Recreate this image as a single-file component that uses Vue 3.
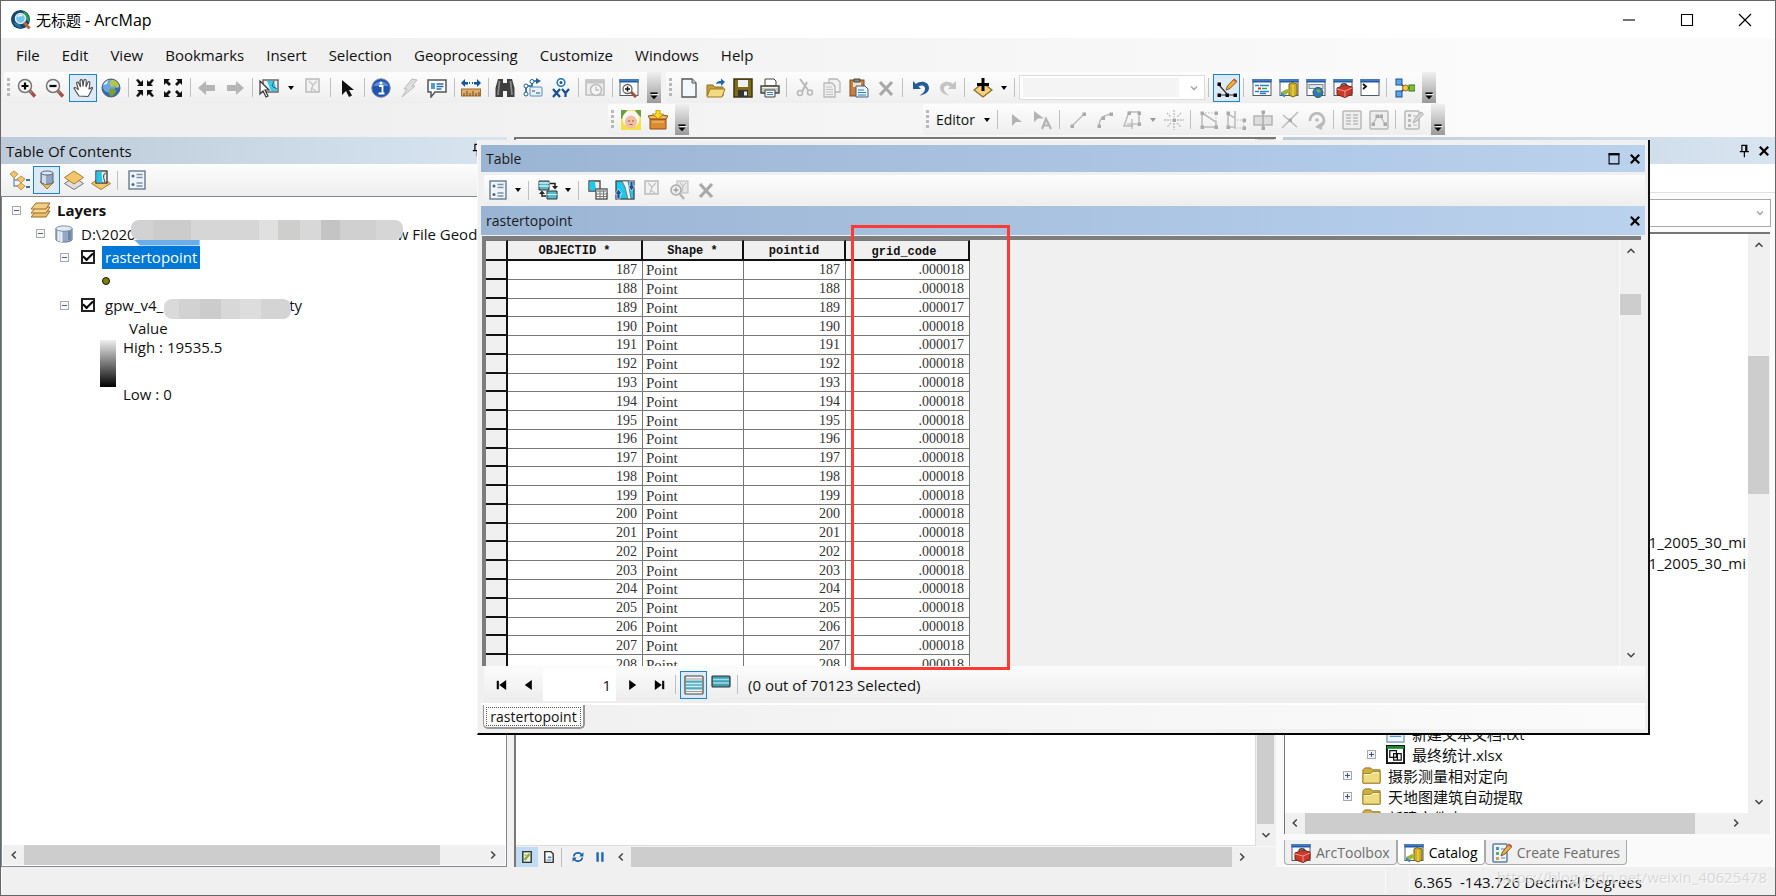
<script setup>
import { h } from 'vue'

const win = '<rect x="1" y="1.5" width="18" height="16" fill="#fff" stroke="#555b63"/><path d="M.5 1h19v3.5H.5z" fill="#1f5aa8"/><path d="M1 2h18" stroke="#6f9bd6"/>'
const node = (x, y, c = '#aaa') => `<rect x="${x - 1.5}" y="${y - 1.5}" width="3.5" height="3.5" fill="${c}"/>`
const lens = '<circle cx="8" cy="8" r="6.5" fill="#f4f6f7" stroke="#777" stroke-width="1.5"/><path d="M12.5 12.5l5.5 6" stroke="#a5503c" stroke-width="3.4"/><path d="M12.7 13l2 2" stroke="#888" stroke-width="2"/>'

const icons = {
  app: '<circle cx="9.5" cy="9.5" r="9.5" fill="#17466e"/><path d="M12 1a9 9 0 0 1 6 11l-4-3z" fill="#2c9a50"/><path d="M2 12c2 4 5 6 9 6l-3-4z" fill="#1c7c93"/><circle cx="9.5" cy="8.5" r="5" fill="#6fc5ea" stroke="#dce8ee" stroke-width="1.6"/><path d="M7 7c1-2 3-2 4-1" stroke="#fff" stroke-width="1.5" fill="none"/><path d="M13 12.500l5.500 6" stroke="#b5683f" stroke-width="3"/>',
  zoomin: lens + '<path d="M4.500 8h7M8 4.500v7" stroke="#000" stroke-width="2.200"/>',
  zoomout: lens + '<path d="M4.500 8h7" stroke="#000" stroke-width="2.200"/>',
  hand: '<path d="M6 18C4 15 2 12 1 10c1-1 3 0 4.500 2L3.500 5c1-1.500 2-1 2.500.500L7.500 9 7 2.500C8 1 9 1.500 9.500 3l.5 5.500L11 2c1-1 2.200-.500 2.200.800L13 9l2-5c1.200-1 2.200 0 1.800 1.500L16 11c2 0 3-3 3.500-1C18 13 17 16 15 18.500z" fill="#fff" stroke="#4c4c4c" stroke-width="1.100"/>',
  globe: '<circle cx="10" cy="10" r="9" fill="#2f6cbb"/><circle cx="8" cy="8" r="6.500" fill="#6aa6e4"/><path d="M10 2c4-1 8 3 8.500 7l-3 1-2-2-3 1-2-3z" fill="#b5c64c"/><path d="M9 11c3-1 6 0 6 2s-3 5-5 5.500C8 17 7 13 9 11z" fill="#7f9d32"/><path d="M2 7c1-2 3-4 5-5l-1 4z" fill="#dcecfa"/><circle cx="10" cy="10" r="9" fill="none" stroke="#51606b"/>',
  fixin: '<path d="M1 2l2-1 3 3 2-2v6H2l2-2zM19 2l-2-1-3 3-2-2v6h6l-2-2zM1 18l2 1 3-3 2 2v-6H2l2 2zM19 18l-2 1-3-3-2 2v-6h6l-2 2z" fill="#111"/>',
  fixout: '<path d="M1 1h6L5 3l3 3-2 2-3-3-2 2zM19 1h-6l2 2-3 3 2 2 3-3 2 2zM1 19h6l-2-2 3-3-2-2-3 3-2-2zM19 19h-6l2-2-3-3 2-2 3 3 2-2z" fill="#111"/>',
  back: '<path d="M1 10l8-7v4h9v6H9v4z" fill="#b5b5b5"/>',
  fwd: '<path d="M19 10l-8-7v4H2v6h9v4z" fill="#b5b5b5"/>',
  select: '<rect x="4" y="2" width="15" height="12" fill="#eee" stroke="#666" stroke-width="1.500"/><path d="M8 3h7l3 10h-6z" fill="#2fd0ee"/><path d="M15 3l-2 5 5 3" stroke="#556" fill="none"/><path d="M1 3v13l3-3 3 6 2-1-3-6h4z" fill="#fff" stroke="#333" stroke-width="1.200"/>',
  clear: '<rect x="3" y="1" width="13" height="13" fill="#f2f2f2" stroke="#bbb" stroke-width="1.500"/><path d="M6 3l4 4 4-4M10 7l-2 6M8 10l5 3" stroke="#c4c4c4" fill="none" stroke-width="1.300"/>',
  arrow: '<path d="M5 2v15l4-4 3 6 3-1.500-3-5.500h5z" fill="#111"/>',
  info: '<circle cx="10" cy="10" r="9.200" fill="#1f55b0" stroke="#6c7c96"/><path d="M2.500 8a8 7 0 0 1 15 0z" fill="#5b8ada"/><path d="M8 8h3.500v7M7.500 15.500h6" stroke="#fff" stroke-width="1.800" fill="none"/><circle cx="10" cy="5" r="1.500" fill="#fff"/>',
  bolt: '<path d="M13 1l5 1-5 6h3L3 19l5-8H5z" fill="#dedede" stroke="#bbb"/>',
  popup: '<path d="M1 2h18v12H8l-4 5v-5H1z" fill="#fff" stroke="#555" stroke-width="1.500"/><rect x="4" y="5" width="4" height="6" fill="#4f9bd3"/><path d="M9.500 6h7M9.500 8.500h7M9.500 11h5" stroke="#2b6cb0" stroke-width="1.300"/>',
  measure: '<path d="M0 5l4-4v3h3v2.500H4V9zM20 5l-4-4v3h-3v2.500h3V9z" fill="#12559b"/><path d="M8 5h1M11 5h1" stroke="#12559b" stroke-width="2"/><rect x=".5" y="11" width="19" height="7" fill="#e0ad6a" stroke="#9c6b30"/><path d="M3 18v-3M6 18v-5M9 18v-3M12 18v-5M15 18v-3M18 18v-4" stroke="#6d4619"/>',
  binoc: '<path d="M3 1h5v4h4V1h5l2.500 9v9H12v-6H8v6H.5v-9z" fill="#3f3f3f"/><path d="M4.500 3L3 17M15.500 3L17 17" stroke="#8b8b8b" stroke-width="1.800"/>',
  route: '<path d="M3 15V8h6V3h5" stroke="#1f6095" stroke-width="1.600" fill="none"/><path d="M13 0l5 3-5 3z" fill="#1f6095"/><circle cx="3" cy="16" r="2" fill="#fff" stroke="#1f6095"/><circle cx="3" cy="8" r="2" fill="#fff" stroke="#1f6095"/><circle cx="9" cy="3.500" r="2" fill="#fff" stroke="#1f6095"/><rect x="7" y="9" width="12" height="9" rx="1" fill="#e9f2fa" stroke="#5a88ae"/><path d="M9 13h3M13 15h4" stroke="#5a88ae" stroke-width="1.500"/>',
  xy: '<circle cx="10" cy="4.500" r="3.800" fill="#fff" stroke="#1f78b8" stroke-width="1.600"/><circle cx="10" cy="4.500" r="1.500" fill="#1f5a94"/><path d="M2 11l7 8M9 11l-7 8M11 11l3.500 4L18 11M14.500 15v4" stroke="#174f8f" stroke-width="2.200" fill="none"/>',
  time: '<rect x="1" y="2" width="18" height="15" fill="#eee" stroke="#bdbdbd" stroke-width="1.500"/><path d="M1 4h18" stroke="#c6c6c6" stroke-width="3"/><circle cx="11" cy="12" r="5.500" fill="#f5f5f5" stroke="#bbb" stroke-width="1.500"/><path d="M11 8.500V12h3" stroke="#bbb" fill="none" stroke-width="1.300"/>',
  viewer: win + '<circle cx="8.500" cy="11" r="4.500" fill="#fff" stroke="#666" stroke-width="1.300"/><path d="M6 11h5M8.500 8.500v5" stroke="#111" stroke-width="1.500"/><path d="M12 14l5 5" stroke="#a5503c" stroke-width="3"/>',
  newdoc: '<path d="M3 1h10l4 4v14H3z" fill="#f3f8fd" stroke="#555" stroke-width="1.300"/><path d="M13 1v4h4" fill="#cfdce8" stroke="#555"/>',
  open: '<path d="M1 7h6l1.500 2H17v9H1z" fill="#c6a23a" stroke="#8b6d1c"/><path d="M4 11h15l-3 8H1z" fill="#f2db82" stroke="#9a7a22"/><path d="M10 6c1-3 3-3 5-3V.5L19 4l-4 4V5.500c-2 0-3 0-5 .5z" fill="#1f66a8"/>',
  save: '<path d="M1 1h18v18H1z" fill="#7d6c1b" stroke="#3e3712" stroke-width="1.500"/><rect x="5" y="2" width="10" height="7" fill="#eef0f2"/><rect x="5" y="12" width="10" height="7" fill="#333"/><rect x="11" y="13.500" width="3" height="4" fill="#eee"/>',
  print: '<path d="M5 1h9l2 2v5H5z" fill="#fff" stroke="#444"/><path d="M1 8h18v7H1z" fill="#c3c9bb" stroke="#444" stroke-width="1.400"/><path d="M5 12h10v7H5z" fill="#eaf3fb" stroke="#444"/><path d="M7 14.500h6M7 16.500h6" stroke="#4d86b8"/><path d="M2 9.500h16" stroke="#f4f4ee"/>',
  cut: '<path d="M5 1l8 11M12 4L7 14" stroke="#b9b9b9" stroke-width="2"/><circle cx="5" cy="15" r="2.500" fill="none" stroke="#b9b9b9" stroke-width="1.600"/><circle cx="15" cy="14.500" r="2.500" fill="none" stroke="#b9b9b9" stroke-width="1.600"/>',
  copy: '<path d="M7 1h8l3 3v10H7z" fill="#f2f2f2" stroke="#b9b9b9" stroke-width="1.300"/><path d="M2 5h8l3 3v11H2z" fill="#eee" stroke="#b9b9b9" stroke-width="1.300"/><path d="M4 9h6M4 11.500h7M4 14h7M4 16.500h7" stroke="#c4c4c4"/>',
  paste: '<rect x="1" y="2" width="14" height="16" fill="#c4823d" stroke="#7d4b1b"/><rect x="4" y="4" width="8" height="5" fill="#f0e3cd"/><path d="M5 1h6v3H5z" fill="#888" stroke="#444"/><path d="M7 8h9l3 3v8H7z" fill="#eaf4fc" stroke="#445f7d"/><path d="M9 12h6M9 14.500h8M9 17h8" stroke="#2d7cc0"/>',
  del: '<path d="M4 4l12 13M16 4L4 17" stroke="#a9a9a9" stroke-width="3.200"/>',
  undo: '<path d="M2 3v8h8L7.500 8.500c4-2.500 8 0 6 4.500-1 2-2.500 3-5 4.500 5-.5 9-3 9.500-7C18.500 4 10 1.500 5 6z" fill="#225c98"/>',
  redo: '<path d="M18 3v8h-8l2.500-2.500c-4-2.500-8 0-6 4.500 1 2 2.500 3 5 4.500-5-.5-9-3-9.500-7C1.500 4 10 1.500 15 6z" fill="#c3c3c3"/>',
  add: '<path d="M10 5l9 7-9 7-9-7z" fill="#f4cf7c" stroke="#8c6c2b" stroke-width="1.300"/><path d="M10 0v13M4 6.500h12" stroke="#000" stroke-width="3"/>',
  edittog: '<path d="M2 7l8 9M2 17h15" stroke="#333" stroke-width="1.200"/>' + [[2, 17], [10, 17], [18, 17], [2, 6]].map(p => node(p[0], p[1], '#000')).join('') + '<path d="M9 12l1.500-4L17 1l3 2.500L13 10.500z" fill="#eeae3c" stroke="#8a6020"/><path d="M16 2l1.500-1.500L20 3l-1 1.500z" fill="#d35252"/>',
  tocwin: win + '<path d="M3 7.500h4M8 7.500h9M3 13.500h4M8 13.500h9M8 15.500h6" stroke="#2b7fd0" stroke-width="1.300"/><path d="M6 10.500h3" stroke="#d33" stroke-width="2"/><path d="M10 10.500h5" stroke="#3a3" stroke-width="1.500"/>',
  catalog: win + '<path d="M10 6l3-1.500 5 1.500v11l-4 2-4-2z" fill="#cfae22" stroke="#7a6410"/><path d="M14 7v11" stroke="#f2df6a"/><path d="M2 14l6-3 4 2-6 4z" fill="#a0b33a"/><path d="M2 14l4 3v2.500L2 17z" fill="#3a87b8"/>',
  searchwin: win + '<rect x="3" y="6.500" width="14" height="4" fill="#d8e3ee" stroke="#7c8a98"/><circle cx="12" cy="14.500" r="5" fill="#2f78b8" stroke="#355"/><path d="M10 12c2-2 5 0 5 2l-3 1z" fill="#79b04c"/>',
  toolbox: win + '<path d="M4 10l8-3 7 2v7l-7 3.500-8-3z" fill="#c93a2b" stroke="#7b1d15"/><path d="M4 11l8 2 7-3M12 13v6" stroke="#f09a8c" fill="none"/><path d="M8 8c0-3 6-3 6 0" stroke="#444" fill="none" stroke-width="1.300"/>',
  python: win + '<path d="M3 6l3 2.500L3 11" stroke="#111" fill="none" stroke-width="1.800"/>',
  model: '<path d="M4 4l6 6-6 6M10 10h6" stroke="#456" stroke-width="1.500" fill="none"/><rect x="1" y="1" width="6" height="6" fill="#5aa6ea" stroke="#1b4f8d"/><rect x="1" y="13" width="6" height="6" fill="#5aa6ea" stroke="#1b4f8d"/><circle cx="10.500" cy="10" r="3" fill="#f3c948" stroke="#8c6a14"/><rect x="14" y="7" width="6" height="6" fill="#7fc13d" stroke="#3e6e17"/>',
  sheep: '<path d="M0 0h20v20H0z" fill="#f4e14a"/><path d="M0 0h6l-2 6-4 3zM14 0h6v7l-4-3z" fill="#679e46"/><circle cx="10" cy="9" r="8.500" fill="#f8f4ee"/><ellipse cx="10" cy="12" rx="6" ry="6.500" fill="#efc0a4"/><circle cx="8" cy="11" r=".8" fill="#844"/><circle cx="12" cy="11" r=".8" fill="#844"/><path d="M8.500 14.500h3" stroke="#b55"/>',
  box: '<path d="M2 9h16v10H2z" fill="#dd8a33" stroke="#88501a"/><path d="M2 9L0 6l6-1 4 4 4-4 6 1-2 3z" fill="#f3b765" stroke="#88501a"/><path d="M4 12h12" stroke="#f6c585"/><path d="M8 0h4v4h3.500L10 9 4.500 4H8z" fill="#ffd91f" stroke="#a87b00" stroke-width=".7"/>',
  play: '<path d="M6 4v12l4-4h6z" fill="#b3b3b3"/>',
  playA: '<path d="M1 1v11l4-3.500h6z" fill="#b3b3b3"/><path d="M9 19l4-10 5 10M11 15.500h5.500" stroke="#b3b3b3" stroke-width="2.200" fill="none"/>',
  line: '<path d="M4 16L16 4" stroke="#bbb" stroke-width="1.500"/>' + node(4, 16) + node(16, 4),
  arc: '<path d="M4 16C4 9 9 5 17 4" stroke="#bbb" stroke-width="1.500" fill="none"/>' + node(4, 16) + node(8, 8) + node(16, 4),
  trace: '<path d="M7 2h10v12M7 2L2 16h9" stroke="#bbb" stroke-width="1.500" fill="none"/>' + node(7, 3) + node(17, 3) + node(17, 14) + '<path d="M10 9v10M5 14h10" stroke="#aaa"/>',
  burst: '<path d="M10 0v7M10 13v7M0 10h7M13 10h7M3 3l4 4M13 13l4 4M17 3l-4 4M7 13l-4 4" stroke="#bbb" stroke-width="1.300" stroke-dasharray="2 1"/>' + node(10, 10),
  poly: '<path d="M3 3v14h14V12L3 3" stroke="#bbb" stroke-width="1.500" fill="none"/><path d="M3 3h14v9" stroke="#bbb" stroke-dasharray="1.500 1.500" fill="none"/>' + node(3, 3) + node(17, 3) + node(3, 17) + node(17, 17),
  reshape: '<path d="M2 4v13h7V8zM9 1v18" stroke="#bbb" stroke-width="1.500" fill="none"/><path d="M11 10h7v8h-7" stroke="#bbb" stroke-dasharray="1.500 1.500" fill="none"/>' + node(2, 3) + node(2, 17) + node(18, 10) + node(18, 18),
  split: '<rect x="1" y="6" width="18" height="9" fill="#ddd" stroke="#b5b5b5" stroke-width="1.500"/><path d="M10 1v18" stroke="#aaa" stroke-width="1.500"/>' + node(10, 2) + node(10, 18),
  cross: '<path d="M2 18L18 2M3 5l14 12" stroke="#bbb" stroke-width="1.500"/>' + node(10, 10),
  rotate: '<path d="M3 11a7 7 0 1 1 9 6" stroke="#bbb" stroke-width="2.800" fill="none"/><path d="M15 12v8l-7-3z" fill="#bbb"/><circle cx="10" cy="10" r="1.800" fill="#bbb"/>',
  attrs: '<rect x="1" y="1" width="18" height="18" rx="1" fill="#eee" stroke="#b9b9b9" stroke-width="1.500"/><path d="M4 5h5M4 8h5M4 11h5M4 14h5M11 5h5M11 8h5M11 11h5M11 14h5" stroke="#bbb" stroke-width="1.300"/>',
  sketch: '<rect x="1" y="1" width="18" height="18" rx="1" fill="#eee" stroke="#b9b9b9" stroke-width="1.500"/><path d="M4 14l4-7h4l4 7" stroke="#bbb" fill="none" stroke-width="1.300"/>' + node(4, 14) + node(8, 6) + node(12, 6) + node(16, 14),
  create: '<rect x="1" y="1" width="14" height="18" rx="1" fill="#f1f1f1" stroke="#b9b9b9" stroke-width="1.500"/><path d="M4 4h3v3H4zM4 9h3v3H4zM4 14h3v3H4z" fill="#bbb"/><path d="M9 6h4M9 15h4" stroke="#bbb"/><path d="M9 13l1.500-4L17 2l2.500 2L13 11z" fill="#d6d6d6" stroke="#b0b0b0"/>',
  createc: '<rect x="1" y="1" width="14" height="18" rx="1" fill="#edf4fb" stroke="#5e7f9e" stroke-width="1.500"/><path d="M4 4h3v3H4z" fill="#4d8fd0"/><path d="M4 9h3v3H4z" fill="#5fb160"/><path d="M4 14h3v3H4z" fill="#e09a3f"/><path d="M9 6h4M9 15h4" stroke="#58a"/><path d="M9 13l1.500-4L17 1l3 2.500L13 11z" fill="#eeb04a" stroke="#7a5a20"/><path d="M16 2l1.500-1.500L20 3l-1 1.500z" fill="#d35252"/>',
  drawo: '<path d="M4 6v10h6M4 10h6" stroke="#7694b3" stroke-width="1.300" fill="none"/><path d="M4 1l4 3-4 4-4-4zM11 6l4 3-4 4-4-4zM11 13l4 3-4 4-4-4z" fill="#f0c56c" stroke="#b4863a" stroke-width=".8"/><path d="M16 10h4M16 17h4" stroke="#2d79ae" stroke-width="2"/>',
  source: '<path d="M3 12l7-4 7 4-7 7z" fill="#edbb5b" stroke="#a87a2c"/><path d="M4 3v9c0 3 12 3 12 0V3z" fill="#8fa5c3" stroke="#556880"/><path d="M6 4v9M8 4v10" stroke="#e6edf5" stroke-width="1.500"/><ellipse cx="10" cy="3" rx="6" ry="2" fill="#dfe7f1" stroke="#556880"/>',
  visible: '<path d="M10 7l9.500 6.500L10 19.500.5 13.500z" fill="#dedede" stroke="#777"/><path d="M10 1l9.500 6.500L10 14 .5 7.500z" fill="#f3c66e" stroke="#a87a2c"/>',
  selected: '<path d="M10 7l9.500 6.500L10 19.500.5 13.500z" fill="#f3c66e" stroke="#a87a2c"/><rect x="5" y="1" width="11" height="12" fill="#eee" stroke="#333" stroke-width="1.300"/><path d="M5.500 1.500h5l1 11h-6z" fill="#21c8e8"/><path d="M15 3c-3 1-3 4-1 9" stroke="#333" fill="none"/>',
  options: '<rect x="2" y="1" width="16" height="18" fill="#eef4fa" stroke="#5d7187" stroke-width="1.300"/><circle cx="6" cy="6" r="1.500" fill="#567"/><circle cx="6" cy="14.500" r="1.500" fill="#567"/><path d="M9.500 4.500h6M9.500 7.500h6M9.500 13h6M9.500 16h6" stroke="#7a93ad" stroke-width="1.300"/>',
  layers: '<path d="M5 11h14l-4 6H0z" fill="#eebf69" stroke="#9a6c26"/><path d="M5 7h14l-4 6H0z" fill="#f6d592" stroke="#9a6c26"/><path d="M5 3h14l-4 6H0z" fill="#f3cd85" stroke="#9a6c26"/>',
  gdb: '<path d="M1 4v12c0 4 18 4 18 0V4z" fill="#96a9c4" stroke="#5f7187"/><path d="M4 5v13M7 6v13" stroke="#edf2f8" stroke-width="2.500"/><path d="M16 6v11" stroke="#6f84a3" stroke-width="3"/><ellipse cx="10" cy="4" rx="9" ry="3" fill="#e3eaf3" stroke="#74869c"/>',
  related: '<path d="M1 1h10v9H1z" fill="#58b9cc" stroke="#333"/><path d="M1 3h10M1 6h10M9 14h10M9 17h10" stroke="#c9eef4" stroke-width="1.300"/><path d="M9 11h10v8H9z" fill="#58b9cc" stroke="#333"/><path d="M9 14.500h10" stroke="#c9eef4"/><path d="M12 3.500h5V7M8 16H4v-4" stroke="#222" stroke-width="1.500" fill="none"/><path d="M14 6h6l-3 3.500zM1 14h6l-3-3.500z" fill="#222"/>',
  selattr: '<path d="M1 1h11v10H1z" fill="#eee" stroke="#444" stroke-width="1.300"/><path d="M1.500 1.500H7l1 9H1.500z" fill="#1fc9ea"/><rect x="8" y="9" width="11" height="10" fill="#fff" stroke="#444" stroke-width="1.300"/><path d="M8 11h11" stroke="#aaa" stroke-width="2.500"/><path d="M8 14h11M8 16.500h11M12 11v8M15.500 11v8" stroke="#777"/>',
  switchs: '<rect x="1" y="1" width="18" height="18" fill="#1fc9ea" stroke="#444" stroke-width="1.300"/><path d="M7 1l3 6 3 12h3L13 1z" fill="#f2f2f2" stroke="#555" stroke-width=".7"/><path d="M15 1h3v5h2l-3.500 5L13 6h2zM2 19v-5H0l3.500-5L7 14H5v5z" fill="#14539c" stroke="#fff" stroke-width=".6"/>',
  zoomsel: '<rect x="8" y="1" width="11" height="12" fill="#e6e6e6" stroke="#bbb"/><path d="M11 3l3 3 3-3M14 6l-1 6" stroke="#bbb" fill="none"/><circle cx="7" cy="10" r="5" fill="#eee" stroke="#aaa" stroke-width="1.500"/><path d="M4.500 10h5M7 7.500v5" stroke="#888"/><path d="M11 14l4 5" stroke="#b5b5b5" stroke-width="2.500"/>',
  first: '<path d="M4 4v12" stroke="#000" stroke-width="3"/><path d="M16 3v14L6 10z"/>',
  prev: '<path d="M14 3v14L4 10z"/>',
  next: '<path d="M6 3v14l10-7z"/>',
  last: '<path d="M16 4v12" stroke="#000" stroke-width="3"/><path d="M4 3v14l10-7z"/>',
  showall: '<rect x="1" y="1" width="18" height="18" rx="1" fill="#f4f4f4" stroke="#444" stroke-width="1.200"/><path d="M1.500 4h17M1.500 16.500h17" stroke="#999"/><path d="M2 5.500h16v9H2z" fill="#54aabb"/><path d="M2 8.500h16M2 11.500h16" stroke="#c9eef4" stroke-width="1.300"/>',
  showsel: '<rect x="1" y="1" width="18" height="11" rx="1" fill="#3f9fb3" stroke="#333" stroke-width="1.200"/><path d="M2 4.500h16M2 8h16" stroke="#a8dbe6" stroke-width="1.400"/>',
  dataview: '<rect x="3" y="1" width="14" height="18" fill="#eef2da" stroke="#333" stroke-width="2.400"/><path d="M6 15l8-10" stroke="#84ad47" stroke-width="4"/><path d="M6 6l4 3" stroke="#a9c66e" stroke-width="3"/>',
  layoutview: '<path d="M3 1h10l4 4v14H3z" fill="#fff" stroke="#333" stroke-width="2.400"/><path d="M8 9h6v3H8zM6 14h8v2H6z" fill="#3c82b8"/>',
  refresh: '<path d="M3 9c0-6 9-8 13-3M17 11c0 6-9 8-13 3" stroke="#155ba5" stroke-width="2.600" fill="none"/><path d="M19 2v7h-7zM1 18v-7h7z" fill="#155ba5"/>',
  pause: '<path d="M6 2v16M14 2v16" stroke="#1f66b5" stroke-width="4"/>',
  folder: '<path d="M1 4l2-2h6l2 2h8v14H1z" fill="#cdb03f" stroke="#8c7420"/><path d="M1 8h8l2-2h8v12H1z" fill="#efdc80" stroke="#9c8226"/><path d="M2 9h7.500l2-2H18" stroke="#fff6c2" fill="none"/>',
  txt: '<rect x="1" y="0" width="18" height="19" fill="#eff6fd" stroke="#6f8fb5" stroke-width="1.300"/><path d="M4 5h12M4 9h12M4 13h12" stroke="#5a93d0" stroke-width="1.300"/>',
  xlsx: '<rect x="1" y="1" width="18" height="18" fill="#fff" stroke="#111" stroke-width="2"/><path d="M1 2.500h18" stroke="#138a2c" stroke-width="3"/><path d="M4 6h7v7H4zM8 9h8v7H8zM12 9v7" fill="#fff" stroke="#111" stroke-width="1.300"/>',
  up: '<path d="M5 12.500l5-5 5 5" fill="none" stroke="#444" stroke-width="2.200"/>',
  down: '<path d="M5 7.500l5 5 5-5" fill="none" stroke="#444" stroke-width="2.200"/>',
  left: '<path d="M12.500 5l-5 5 5 5" fill="none" stroke="#444" stroke-width="2.200"/>',
  right: '<path d="M7.500 5l5 5-5 5" fill="none" stroke="#444" stroke-width="2.200"/>',
  pin: '<path d="M7 2h7v9H7zM12.500 2v9M4 11h13M10.500 11v8" stroke="#000" stroke-width="1.700" fill="none"/>',
  close: '<path d="M4 4l12 12M16 4L4 16" stroke="#000" stroke-width="3.200"/>',
  square: '<path d="M3 4h14v13H3z" fill="none" stroke="#000" stroke-width="1.600"/><path d="M2 3h16" stroke="#000" stroke-width="3"/>',
  wmin: '<path d="M4 10h12" stroke="#000" stroke-width="1.100"/>',
  wmax: '<path d="M4.500 4.500h11v11h-11z" stroke="#000" stroke-width="1.100" fill="none"/>',
  wclose: '<path d="M4 4l12 12M16 4L4 16" stroke="#000" stroke-width="1.200"/>',
  over: '<path d="M4 7h12" stroke="#000" stroke-width="2.500"/><path d="M4 11h12l-6 6z"/><path d="M6 9.300h12" stroke="#fff" stroke-width="1.500"/>'
}
const Ic = ({ n }) => h('svg', { viewBox: '0 0 20 20', class: 'ic', 'aria-hidden': 'true', innerHTML: icons[n] })
Ic.props = ['n']

const menus = ['File', 'Edit', 'View', 'Bookmarks', 'Insert', 'Selection', 'Geoprocessing', 'Customize', 'Windows', 'Help']
const tools = 'zoomin zoomout *hand globe | fixin fixout | back fwd | select v clear | arrow | info bolt popup | measure | binoc route xy | time | viewer'.split(' ')
const standard = 'newdoc open save print | cut copy paste del | undo redo | add v |'.split(' ')
const windowsBar = '| *edittog | tocwin catalog searchwin toolbox python | model'.split(' ')
const editorBar = '| play playA | line arc trace v burst | poly reshape split cross rotate | attrs sketch | create'.split(' ')
const tocBar = 'drawo *source visible selected | options'.split(' ')
const tableBar = 'options v | related v | selattr switchs clear zoomsel del'.split(' ')

const rows = Array.from({ length: 22 }, (_, i) => {
  const id = 187 + i
  return { id, shape: 'Point', code: id === 189 || id === 191 ? '.000017' : '.000018' }
})
</script>

<template>
  <div class="app">
    <header class="title">
      <Ic n="app" class="logo" /><h1>无标题 <span>- ArcMap</span></h1>
      <button aria-label="Minimize"><Ic n="wmin" /></button>
      <button aria-label="Maximize"><Ic n="wmax" /></button>
      <button aria-label="Close"><Ic n="wclose" /></button>
    </header>
    <nav class="menu"><button v-for="m in menus" :key="m">{{ m }}</button></nav>

    <div class="bars">
      <div class="bar wide">
        <i class="grip"></i>
        <template v-for="(t, i) in tools" :key="i">
          <i v-if="t === '|'" class="sep"></i>
          <button v-else-if="t === 'v'" class="drop" aria-label="More"></button>
          <button v-else class="tool" :class="{ on: t[0] === '*' }" :aria-label="t.replace('*', '')"><Ic :n="t.replace('*', '')" /></button>
        </template>
        <button class="over" aria-label="Toolbar options"><Ic n="over" /></button>
      </div>
      <div class="bar">
        <i class="grip"></i>
        <template v-for="(t, i) in standard" :key="i">
          <i v-if="t === '|'" class="sep"></i>
          <button v-else-if="t === 'v'" class="drop" aria-label="More"></button>
          <button v-else class="tool" :aria-label="t"><Ic :n="t" /></button>
        </template>
        <span class="scale"><select aria-label="Map scale" disabled></select><Ic n="down" /></span>
        <template v-for="(t, i) in windowsBar" :key="i">
          <i v-if="t === '|'" class="sep"></i>
          <button v-else class="tool" :class="{ on: t[0] === '*' }" :aria-label="t.replace('*', '')"><Ic :n="t.replace('*', '')" /></button>
        </template>
        <button class="over" aria-label="Toolbar options"><Ic n="over" /></button>
      </div>
    </div>
    <div class="bars second">
      <div class="bar">
        <i class="grip"></i>
        <button class="tool" aria-label="Custom tool"><Ic n="sheep" /></button>
        <button class="tool" aria-label="Package"><Ic n="box" /></button>
        <button class="over" aria-label="Toolbar options"><Ic n="over" /></button>
      </div>
      <div class="bar editor">
        <i class="grip"></i>
        <button class="editbtn">Editor</button><button class="drop" aria-label="Editor menu"></button>
        <template v-for="(t, i) in editorBar" :key="i">
          <i v-if="t === '|'" class="sep"></i>
          <button v-else-if="t === 'v'" class="drop dim" aria-label="More"></button>
          <button v-else class="tool" :aria-label="t"><Ic :n="t" /></button>
        </template>
        <button class="over" aria-label="Toolbar options"><Ic n="over" /></button>
      </div>
    </div>

    <main class="work">
      <section class="toc">
        <h2 class="cap">Table Of Contents <button class="tocpin" aria-label="Pin"><Ic n="pin" /></button></h2>
        <div class="bar tocbar">
          <template v-for="(t, i) in tocBar" :key="i">
            <i v-if="t === '|'" class="sep"></i>
            <button v-else class="tool" :class="{ on: t[0] === '*' }" :aria-label="t.replace('*', '')"><Ic :n="t.replace('*', '')" /></button>
          </template>
        </div>
        <div class="tocbody">
          <ul class="tree">
            <li class="l0"><button class="tg" aria-label="Collapse"></button><Ic n="layers" /><b>Layers</b></li>
            <li class="l1"><button class="tg" aria-label="Collapse"></button><Ic n="gdb" /><span>D:\2020</span><i class="mosaic long"></i><span>w File Geodatabase</span></li>
            <li class="l2"><button class="tg" aria-label="Collapse"></button><input id="lyr1" type="checkbox" checked><label for="lyr1" class="sel">rastertopoint</label></li>
            <li class="l3"><i class="dot"></i></li>
            <li class="l2"><button class="tg" aria-label="Collapse"></button><input id="lyr2" type="checkbox" checked><label for="lyr2">gpw_v4_</label><i class="mosaic short"></i><span>ty</span></li>
            <li class="l4">Value</li>
          </ul>
          <div class="legend"><i class="ramp"></i><div><span>High : 19535.5</span><span>Low : 0</span></div></div>
          <div class="hs tochs">
            <button aria-label="Scroll left"><Ic n="left" /></button>
            <div class="track"><i class="thumb"></i></div>
            <button aria-label="Scroll right"><Ic n="right" /></button>
          </div>
        </div>
      </section>

      <section class="map">
        <div class="canvas"></div>
        <div class="vs"><i class="thumb"></i><button aria-label="Scroll down"><Ic n="down" /></button></div>
        <div class="mapbar">
          <button class="mini on" aria-label="Data view"><Ic n="dataview" /></button>
          <button class="mini" aria-label="Layout view"><Ic n="layoutview" /></button>
          <i class="sep"></i>
          <button class="mini" aria-label="Refresh"><Ic n="refresh" /></button>
          <button class="mini" aria-label="Pause"><Ic n="pause" /></button>
          <div class="hs">
            <button aria-label="Scroll left"><Ic n="left" /></button>
            <div class="track"><i class="thumb"></i></div>
            <button aria-label="Scroll right"><Ic n="right" /></button>
          </div>
        </div>
      </section>

      <section class="cat">
        <h2 class="cap"><button aria-label="Pin"><Ic n="pin" /></button><button aria-label="Close"><Ic n="close" /></button></h2>
        <div class="blank"></div>
        <div class="loc"><select aria-label="Location"></select><Ic n="down" /></div>
        <div class="catbody">
          <ul class="ctree">
            <li class="tail">1_2005_30_mi</li>
            <li class="tail">1_2005_30_mi</li>
            <li class="c2 jump"><i class="nt"></i><Ic n="txt" />新建文本文档.txt</li>
            <li class="c2"><button class="tg plus" aria-label="Expand"></button><Ic n="xlsx" />最终统计.xlsx</li>
            <li class="c1"><button class="tg plus" aria-label="Expand"></button><Ic n="folder" />摄影测量相对定向</li>
            <li class="c1"><button class="tg plus" aria-label="Expand"></button><Ic n="folder" />天地图建筑自动提取</li>
            <li class="c1"><i class="nt"></i><Ic n="folder" />新建文件夹</li>
          </ul>
          <div class="vs"><button aria-label="Scroll up"><Ic n="up" /></button><div class="vtrack"><i class="thumb"></i></div><button aria-label="Scroll down"><Ic n="down" /></button></div>
          <div class="hs">
            <button aria-label="Scroll left"><Ic n="left" /></button>
            <div class="track"><i class="thumb"></i></div>
            <button aria-label="Scroll right"><Ic n="right" /></button>
          </div>
        </div>
        <div class="tabs">
          <button><Ic n="toolbox" />ArcToolbox</button>
          <button class="cur"><Ic n="catalog" />Catalog</button>
          <button><Ic n="createc" />Create Features</button>
        </div>
      </section>
    </main>

    <footer class="status">
      <span class="pane p1"></span><span class="pane p2"></span>
      <span class="pane p3">6.365&nbsp; -143.726 Decimal Degrees</span>
      <span class="mark">https://blog.csdn.net/weixin_40625478</span>
    </footer>

    <section class="float">
      <h2 class="fcap">Table <button aria-label="Maximize"><Ic n="square" /></button><button aria-label="Close"><Ic n="close" /></button></h2>
      <div class="bar ftools">
        <template v-for="(t, i) in tableBar" :key="i">
          <i v-if="t === '|'" class="sep"></i>
          <button v-else-if="t === 'v'" class="drop" aria-label="More"></button>
          <button v-else class="tool" :aria-label="t"><Ic :n="t" /></button>
        </template>
      </div>
      <h3 class="fcap sub">rastertopoint <button aria-label="Close"><Ic n="close" /></button></h3>
      <div class="gridbox">
        <div class="clip">
          <table>
            <colgroup><col class="k0"><col class="k1"><col class="k2"><col class="k3"><col class="k4"></colgroup>
            <thead><tr><th></th><th>OBJECTID *</th><th>Shape *</th><th>pointid</th><th class="low">grid_code</th></tr></thead>
            <tbody>
              <tr v-for="r in rows" :key="r.id"><th></th><td>{{ r.id }}</td><td class="s">{{ r.shape }}</td><td>{{ r.id }}</td><td>{{ r.code }}</td></tr>
            </tbody>
          </table>
        </div>
        <div class="vs"><button aria-label="Scroll up"><Ic n="up" /></button><div class="vtrack"><i class="thumb"></i></div><button aria-label="Scroll down"><Ic n="down" /></button></div>
      </div>
      <div class="pager">
        <button class="tool" aria-label="First record"><Ic n="first" /></button>
        <button class="tool" aria-label="Previous record"><Ic n="prev" /></button>
        <input type="text" value="1" aria-label="Record">
        <button class="tool" aria-label="Next record"><Ic n="next" /></button>
        <button class="tool" aria-label="Last record"><Ic n="last" /></button>
        <i class="sep"></i>
        <button class="tool on" aria-label="Show all records"><Ic n="showall" /></button>
        <button class="tool" aria-label="Show selected records"><Ic n="showsel" /></button>
        <i class="sep"></i>
        <span>(0 out of 70123 Selected)</span>
      </div>
      <div class="ftabs"><button><span>rastertopoint</span></button></div>
      <i class="frame"></i>
    </section>
  </div>
</template>

<style>
body { margin: 0; background: #f0f0f0; }
</style>

<style scoped>
.app { position: relative; height: 100vh; min-height: 600px; box-sizing: border-box; display: flex; flex-direction: column; overflow: hidden; border: 1px solid #666; background: linear-gradient(90deg, #f0f0f0 20%, #fbfbfb 85%); color: #111; font: 15px/20px "Open Sans", "Noto Sans", "Noto Sans CJK SC", sans-serif; }
.app * { box-sizing: border-box; }
button { margin: 0; padding: 0; border: 0; background: none; font: inherit; color: inherit; display: flex; align-items: center; justify-content: center; flex: none; }
h1, h2, h3, ul { margin: 0; padding: 0; font: inherit; list-style: none; }
i { display: block; flex: none; }
.ic { width: 20px; height: 20px; flex: none; display: block; }

.title { flex: none; height: 37px; background: #fff; display: flex; align-items: center; padding-left: 10px; }
.title h1 { flex: 1; margin-left: 5px; color: #000; }
.title h1 span { font-size: 16px; }
.title button { width: 58px; height: 37px; }
.title button:last-child { margin-right: 1px; }
.menu { flex: none; height: 34px; display: flex; align-items: center; gap: 22px; padding-left: 15px; white-space: nowrap; }

.bars { flex: none; display: flex; gap: 5px; height: 31px; padding-left: 3px; }
.second { height: 34px; padding: 1px 0 0 607px; gap: 234px; }
.bar { display: flex; align-items: center; height: 31px; flex: none; background: linear-gradient(#fdfdfd, #eeeeee); border-radius: 3px 0 0 3px; }
.grip { width: 3px; height: 19px; margin: 0 3px 0 3px; background: repeating-linear-gradient(#b8b8b8 0 3px, transparent 3px 5px); }
.tool { width: 27px; height: 28px; }
.wide .tool { width: 28px; }
.wide .sep { margin: 0 2px 0 3px; }
.sep { width: 1px; height: 19px; margin: 0 4px 0 3px; background: #c0c0c0; }
.on { border: 1px solid #1883d7; background: #dde9f4; }
.drop { width: 15px; height: 28px; }
.wide .drop { width: 16px; }
.drop::after { content: ""; border: 3px solid transparent; border-top: 4px solid #000; border-bottom: 0; }
.dim::after { border-top-color: #999; }
.over { width: 14px; height: 31px; margin-left: 4px; align-items: flex-end; padding-bottom: 2px; background: linear-gradient(#f0f0f0, #9a9a9a); }
.over .ic { width: 12px; height: 12px; }
.scale { width: 186px; height: 25px; border: 1px solid #dcdcdc; background: #fff; display: flex; align-items: center; justify-content: space-between; padding: 0 4px 0 3px; }
.scale select { width: 156px; height: 19px; border: 0; background: #f0f0f0; appearance: none; }
.scale .ic, .loc .ic { width: 12px; height: 12px; opacity: .5; }
.editbtn { font-size: 14px; width: 47px; }

.work { flex: 1; min-height: 0; display: grid; grid-template-columns: 506fr 762fr 492fr; gap: 7px; }
.work > * { min-width: 0; min-height: 0; }
.cap { height: 27px; flex: none; display: flex; align-items: center; padding-left: 5px; background: linear-gradient(90deg, #bccad9, #d8e5f1); }
.toc { display: flex; flex-direction: column; }
.tocpin { margin-left: auto; margin-right: 23px; margin-bottom: 2px; }
.tocpin .ic, .cat .cap .ic { width: 14px; height: 14px; }
.tocbar { height: 32px; padding-left: 5px; }
.tocbar .sep { margin: 0 5px 0 3px; }
.tocbody { flex: 1; min-height: 0; background: #fff; border: 1px solid #828790; display: flex; flex-direction: column; padding: 1px; overflow: hidden; }
.tree li { display: flex; align-items: center; height: 24px; white-space: nowrap; position: relative; }
.tree .l0 { padding-left: 9px; }
.tree .l1 { padding-left: 33px; height: 23px; }
.tree .l2 { padding-left: 57px; }
.tree .l3 { padding-left: 98px; }
.tree .l4 { padding-left: 126px; height: 22px; }
.tg { width: 9px; height: 9px; border: 1px solid #a9a9a9; background: linear-gradient(#4a5f97, #4a5f97) center / 5px 1px no-repeat #f7f7f7; }
.plus { background: linear-gradient(#35539c, #35539c) center / 5px 1px no-repeat, linear-gradient(#35539c, #35539c) center / 1px 5px no-repeat, #f4f4f4; }
.l0 .ic { margin: 0 6px 0 10px; }
.l1 .ic { margin: 0 8px 0 9px; width: 18px; height: 18px; }
.l1 .tg { margin-right: 1px; }
.tree input { appearance: none; width: 14px; height: 14px; margin: 0 7px 0 12px; border: 2px solid #222; background: #fff; display: grid; place-items: center; flex: none; }
.tree input:checked::after { content: ""; width: 8px; height: 4px; border-left: 2px solid #000; border-bottom: 2px solid #000; transform: rotate(-45deg) translate(1px, -1px); }
.tree label { padding: 0 3px; height: 23px; line-height: 22px; }
.sel { background: #0078d7; color: #fff; }
.dot { width: 8px; height: 8px; margin-left: 1px; border-radius: 50%; border: 1px solid #111; background: #808000; }
.mosaic { height: 20px; z-index: 1; border-radius: 8px; background: linear-gradient(90deg, #d2d2d2 0 8%, #cbcccb 8% 22%, #d6d6d6 22% 47%, #e0e0e0 47% 54%, #cecfcc 54% 62%, #d8d8d8 62% 70%, #c4c4c4 70% 77%, #d0d0d0 77% 90%, #d6d6d6 90%); }
.long { width: 272px; margin: 0 -6px 0 -5px; transform: translateY(-4px); }
.long::after { content: ""; display: block; width: 66px; height: 6px; margin-left: 3px; position: absolute; top: 20px; background: #6aaee9; clip-path: polygon(0 0, 100% 0, 100% 100%, 10% 100%); }
.short { width: 127px; margin: 0 -2px 0 -2px; transform: translateY(4px); background: linear-gradient(90deg, #dadada 0 12%, #d2d2d2 12% 28%, #cccccc 28% 45%, #d8d8d8 45% 60%, #dddddd 60% 76%, #d4d4d4 76%); }
.legend { display: flex; gap: 7px; padding-left: 97px; margin-top: -2px; }
.ramp { width: 16px; height: 47px; margin-top: 3px; background: linear-gradient(#efefef, #000); }
.legend div { display: flex; flex-direction: column; gap: 27px; }

.hs { height: 20px; display: flex; background: #f0f0f0; }
.hs button { width: 20px; height: 20px; }
.hs .ic, .vs .ic { width: 14px; height: 14px; }
.track { flex: 1; }
.track .thumb { height: 100%; }
.thumb { background: #cdcdcd; }
.tochs { margin-top: auto; padding: 0 2px 0 1px; }
.tochs .track { padding-right: 43px; }

.map { display: grid; grid-template-columns: 1fr 20px; grid-template-rows: 1fr 21px; border-top: 2px solid #777; border-left: 2px solid #777; }
.canvas { background: #fff; border-right: 1px solid #ddd; border-bottom: 1px solid #ddd; }
.vs { background: #f0f0f0; display: flex; flex-direction: column; }
.map .vs .thumb { flex: 1; margin: 0 2px 0 1px; }
.vs button { width: 100%; height: 22px; }
.mapbar { grid-column: 1 / 3; display: flex; align-items: center; background: #f0f0f0; margin-top: 1px; }
.mini { width: 22px; height: 20px; }
.mini .ic { width: 12px; height: 12px; }
.mini.on { border: 0; background: #c0dcf3; }
.mapbar .sep { margin: 0 5px 0 1px; }
.mapbar .hs { flex: 1; margin-right: 24px; }

.cat { display: flex; flex-direction: column; }
.cat .cap { justify-content: flex-end; gap: 6px; padding-right: 4px; }
.blank { height: 29px; background: #fff; border-bottom: 1px solid #e0e0e0; flex: none; }
.loc { margin: 6px 4px 5px 4px; height: 28px; flex: none; border: 1px solid #a9a9a9; background: #fff; display: flex; align-items: center; padding-right: 4px; }
.loc select { flex: 1; height: 24px; border: 0; background: #fff; appearance: none; }
.catbody { flex: 1; min-height: 0; display: grid; grid-template-columns: 1fr 22px; grid-template-rows: minmax(0, 1fr) 21px; border-top: 2px solid #777; border-left: 1px solid #777; margin: 0 5px 5px 1px; background: #fff; }
.ctree { display: flex; flex-direction: column; justify-content: flex-end; overflow: hidden; padding-right: 2px; margin-bottom: -15px; clip-path: inset(0 0 15px 0); }
.ctree li { display: flex; align-items: center; gap: 7px; height: 21px; flex: none; white-space: nowrap; }
.ctree .tail { justify-content: flex-end; }
.ctree .jump { margin-top: 150px; }
.ctree .ic { width: 19px; height: 19px; margin-left: 3px; }
.c1 { padding-left: 58px; }
.c2 { padding-left: 82px; }
.nt { width: 9px; }
.cat .vtrack { flex: 1; padding: 100px 1px 0 0; }
.cat .vtrack .thumb { height: 30%; min-height: 138px; }
.catbody .hs { grid-column: 1 / 3; height: 21px; padding-right: 24px; z-index: 1; }
.catbody .track { padding-right: 31px; }
.tabs { flex: none; height: 28px; display: flex; padding-left: 1px; font-size: 14px; background: #fafafa; }
.tabs button { height: 25px; gap: 5px; padding: 2px 6px 0; margin-top: 1px; color: #6d6d6d; background: #f0f0f0; border: 1px solid #aaa; border-top: 0; border-radius: 0 0 4px 4px; }
.tabs .cur { background: #fff; color: #000; }

.status { flex: none; height: 28px; display: flex; position: relative; background: #f0f0f0; }
.pane { border-left: 1px solid #fafafa; margin: 2px 0; padding-left: 4px; line-height: 26px; }
.p1 { flex: 1; }
.p2 { width: 24px; }
.p3 { width: 366px; white-space: nowrap; }
.mark { position: absolute; right: 8px; bottom: 8px; color: #d4d4d4; opacity: .85; text-shadow: 1px 1px 0 #fff; }

.float { position: absolute; left: 476px; right: 125px; top: 139px; bottom: 160px; display: flex; flex-direction: column; padding: 5px 3px 4px 3px; background: #f0f0f0; border: solid; border-width: 0 2px 2px 1px; border-color: #fff #111 #000 #fafafa; }
.fcap { flex: none; display: flex; align-items: center; height: 27px; padding: 0 3px 0 5px; font-size: 14px; color: #1a1a1a; background: linear-gradient(90deg, #9ab4d3, #bad2ee); gap: 7px; }
.fcap button:first-of-type { margin-left: auto; }
.fcap .ic { width: 14px; height: 14px; }
.ftools { height: 30px; margin: 3px 0 1px 3px; }
.ftools .sep { margin: 0 5px 0 3px; }
.ftools .drop { width: 14px; }
.sub { height: 29px; }
.gridbox { flex: 1; min-height: 0; display: flex; border: solid #7d7d7d; border-width: 4px 0 0 4px; margin: 1px 4px 0 1px; }
.clip { flex: 1; min-width: 0; overflow: hidden; }
table { width: 484px; height: 434px; border-collapse: separate; border-spacing: 0; table-layout: fixed; font: 14px/14px "Liberation Serif", "Noto Sans CJK SC", serif; color: #333; }
.k0 { width: 22px; }
.k1 { width: 135px; }
.k2 { width: 101px; }
.k3 { width: 102px; }
.k4 { width: 124px; }
thead tr { height: 21px; }
th { padding: 0; background: #f0f0f0; border: solid #111; border-width: 0 2px 2px 0; font: bold 12px/14px "Liberation Mono", monospace; color: #111; }
thead th { padding-top: 2px; border-top: 1px solid #777; }
thead .low { padding-top: 4px; padding-right: 6px; }
td { padding: 1px 5px 0 0; background: #fff; border: solid #777; border-width: 0 1px 1px 0; text-align: right; }
td.s { text-align: left; padding-left: 3px; font-size: 15px; }
.gridbox .vs { width: 22px; border-left: 1px solid #fafafa; }
.gridbox .vtrack { flex: 1; padding-top: 32px; }
.gridbox .vtrack .thumb { height: 21px; }
.pager { flex: none; height: 37px; display: flex; align-items: center; margin-left: 3px; padding-left: 4px; background: linear-gradient(#fcfcfc, #ececec); white-space: nowrap; }
.pager .tool:nth-child(-n+5) .ic { width: 14px; height: 14px; }
.pager input { width: 73px; height: 32px; border: 0; background: #fff; text-align: right; padding: 0 5px; font: inherit; color: inherit; margin: 0 2px 0 1px; }
.pager span { margin-left: 6px; }
.ftabs { flex: none; height: 26px; border-top: 2px solid #fff; padding-left: 2px; background: linear-gradient(90deg, #f0f0f0, #fbfbfb); }
.ftabs button { height: 24px; width: 102px; font-size: 14px; border: 1px solid #999; border-width: 0 2px 2px 1px; border-radius: 0 0 5px 5px; background: #fdfdfd; }
.ftabs span { border: 1px dotted #555; height: 19px; line-height: 17px; padding: 0 3px; }
.frame { position: absolute; left: 373px; top: 85px; width: 159px; height: 445px; border: 3px solid #fe3a35; }
</style>
